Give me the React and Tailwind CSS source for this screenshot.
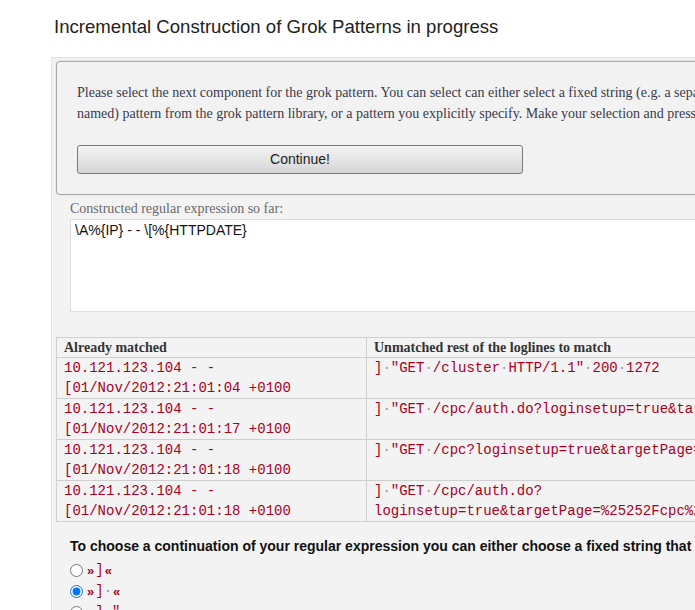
import React from "react";

const rows = [
  ["10.121.123.104 - -", "[01/Nov/2012:21:01:04 +0100", ['] · "GET · /cluster · HTTP/1.1" · 200 · 1272']],
  ["10.121.123.104 - -", "[01/Nov/2012:21:01:17 +0100", ['] · "GET · /cpc/auth.do?loginsetup=true&targetPage=%252Fcpc%252F HTTP/1.1']],
  ["10.121.123.104 - -", "[01/Nov/2012:21:01:18 +0100", ['] · "GET · /cpc?loginsetup=true&targetPage=%252Fcpc%252F HTTP/1.1']],
  ["10.121.123.104 - -", "[01/Nov/2012:21:01:18 +0100", ['] · "GET · /cpc/auth.do?', "loginsetup=true&targetPage=%25252Fcpc%25252F HTTP/1.1"]],
];

function Mono({ text }) {
  const parts = text.split(" · ");
  return (
    <span>
      {parts.map((p, i) => (
        <React.Fragment key={i}>
          {i > 0 && <span className="text-[#999]">·</span>}
          {p}
        </React.Fragment>
      ))}
    </span>
  );
}

export default function App() {
  return (
    <div className="w-[695px] h-[610px] overflow-hidden bg-white">
      <div className="w-[1200px] pl-[51px]">
        <h1 className="pl-[3px] pt-[15px] pb-[18px] text-[18.6px] leading-[24px] text-[#222] font-['Liberation_Sans',sans-serif]">
          Incremental Construction of Grok Patterns in progress
        </h1>
        <div className="border-l border-t border-[#e2e2e2] bg-[#f3f3f3] pt-[3px] pl-[4px] pb-[40px]">
          <div className="rounded-[4px] border border-[#a8a8a8] bg-[#f2f2f2] px-[20px] pt-[20px] pb-[20px] shadow-[0_0_2px_rgba(0,0,0,0.15)]">
            <p className="whitespace-nowrap text-[14px] leading-[21px] text-[#3a3a4a] font-['Liberation_Serif',serif]">
              Please select the next component for the grok pattern. You can select can either select a fixed string (e.g. a separator), a (possibly
              <br />
              named) pattern from the grok pattern library, or a pattern you explicitly specify. Make your selection and press 'Continue'.
            </p>
            <button className="mt-[21px] h-[29px] w-[446px] rounded-[3px] border border-[#7a7a7a] bg-gradient-to-b from-[#f4f4f4] to-[#d6d6d6] text-[14px] text-[#222] font-['Liberation_Sans',sans-serif]">
              Continue!
            </button>
          </div>
          <div className="pl-[14px] pt-[5px]">
            <div className="text-[14px] leading-[18px] text-[#6a6a6a] font-['Liberation_Serif',serif]">
              Constructed regular expression so far:
            </div>
            <div className="mt-[1px] h-[93px] border border-[#dcdcdc] bg-white px-[4px] pt-[1px] text-[14px] leading-[18px] text-[#111] font-['Liberation_Sans',sans-serif]">
              \A%{"{"}IP{"}"} - - \[%{"{"}HTTPDATE{"}"}
            </div>
          </div>
          <table className="mt-[25px] border-collapse">
            <thead>
              <tr>
                <th className="w-[310px] border border-[#cfcfcf] px-[7px] py-0 text-left text-[14px] leading-[19px] font-bold text-[#333] font-['Liberation_Serif',serif]">
                  Already matched
                </th>
                <th className="w-[700px] border border-[#cfcfcf] px-[7px] py-0 text-left text-[14px] leading-[19px] font-bold text-[#333] font-['Liberation_Serif',serif]">
                  Unmatched rest of the loglines to match
                </th>
              </tr>
            </thead>
            <tbody>
              {rows.map((r, i) => (
                <tr key={i}>
                  <td className="border border-[#cfcfcf] px-[7px] py-0 align-top whitespace-nowrap text-[14px] leading-[20px] text-[#a8001e] font-['Liberation_Mono',monospace]">
                    {r[0]}
                    <br />
                    {r[1]}
                  </td>
                  <td className="border border-[#cfcfcf] px-[7px] py-0 align-top whitespace-nowrap text-[14px] leading-[20px] text-[#a8001e] font-['Liberation_Mono',monospace]">
                    {r[2].map((l, j) => (
                      <div key={j}>
                        <Mono text={l} />
                      </div>
                    ))}
                  </td>
                </tr>
              ))}
            </tbody>
          </table>
          <div className="pl-[14px] pt-[14px]">
            <div className="text-[14px] leading-[20px] font-bold text-[#111] font-['Liberation_Sans',sans-serif]">
              To choose a continuation of your regular expression you can either choose a fixed string that matches all loglines, or a pattern from the library.
            </div>
            <div className="mt-[8px] flex flex-col gap-[8px]">
              {[["]", false], ["] · ", true], ['] · "', false]].map(([t, c], i) => (
                <label key={i} className="flex items-center h-[13px]">
                  <input type="radio" name="cont" defaultChecked={c} className="m-0 mr-[4px] h-[13px] w-[13px]" />
                  <span className="text-[13px] font-bold text-[#a8001e] font-['Liberation_Sans',sans-serif]">»</span>
                  <span className="px-[1px] text-[14px] text-[#a8001e] font-['Liberation_Mono',monospace]">
                    <Mono text={t} />
                  </span>
                  <span className="text-[13px] font-bold text-[#a8001e] font-['Liberation_Sans',sans-serif]">«</span>
                </label>
              ))}
            </div>
          </div>
        </div>
      </div>
    </div>
  );
}
